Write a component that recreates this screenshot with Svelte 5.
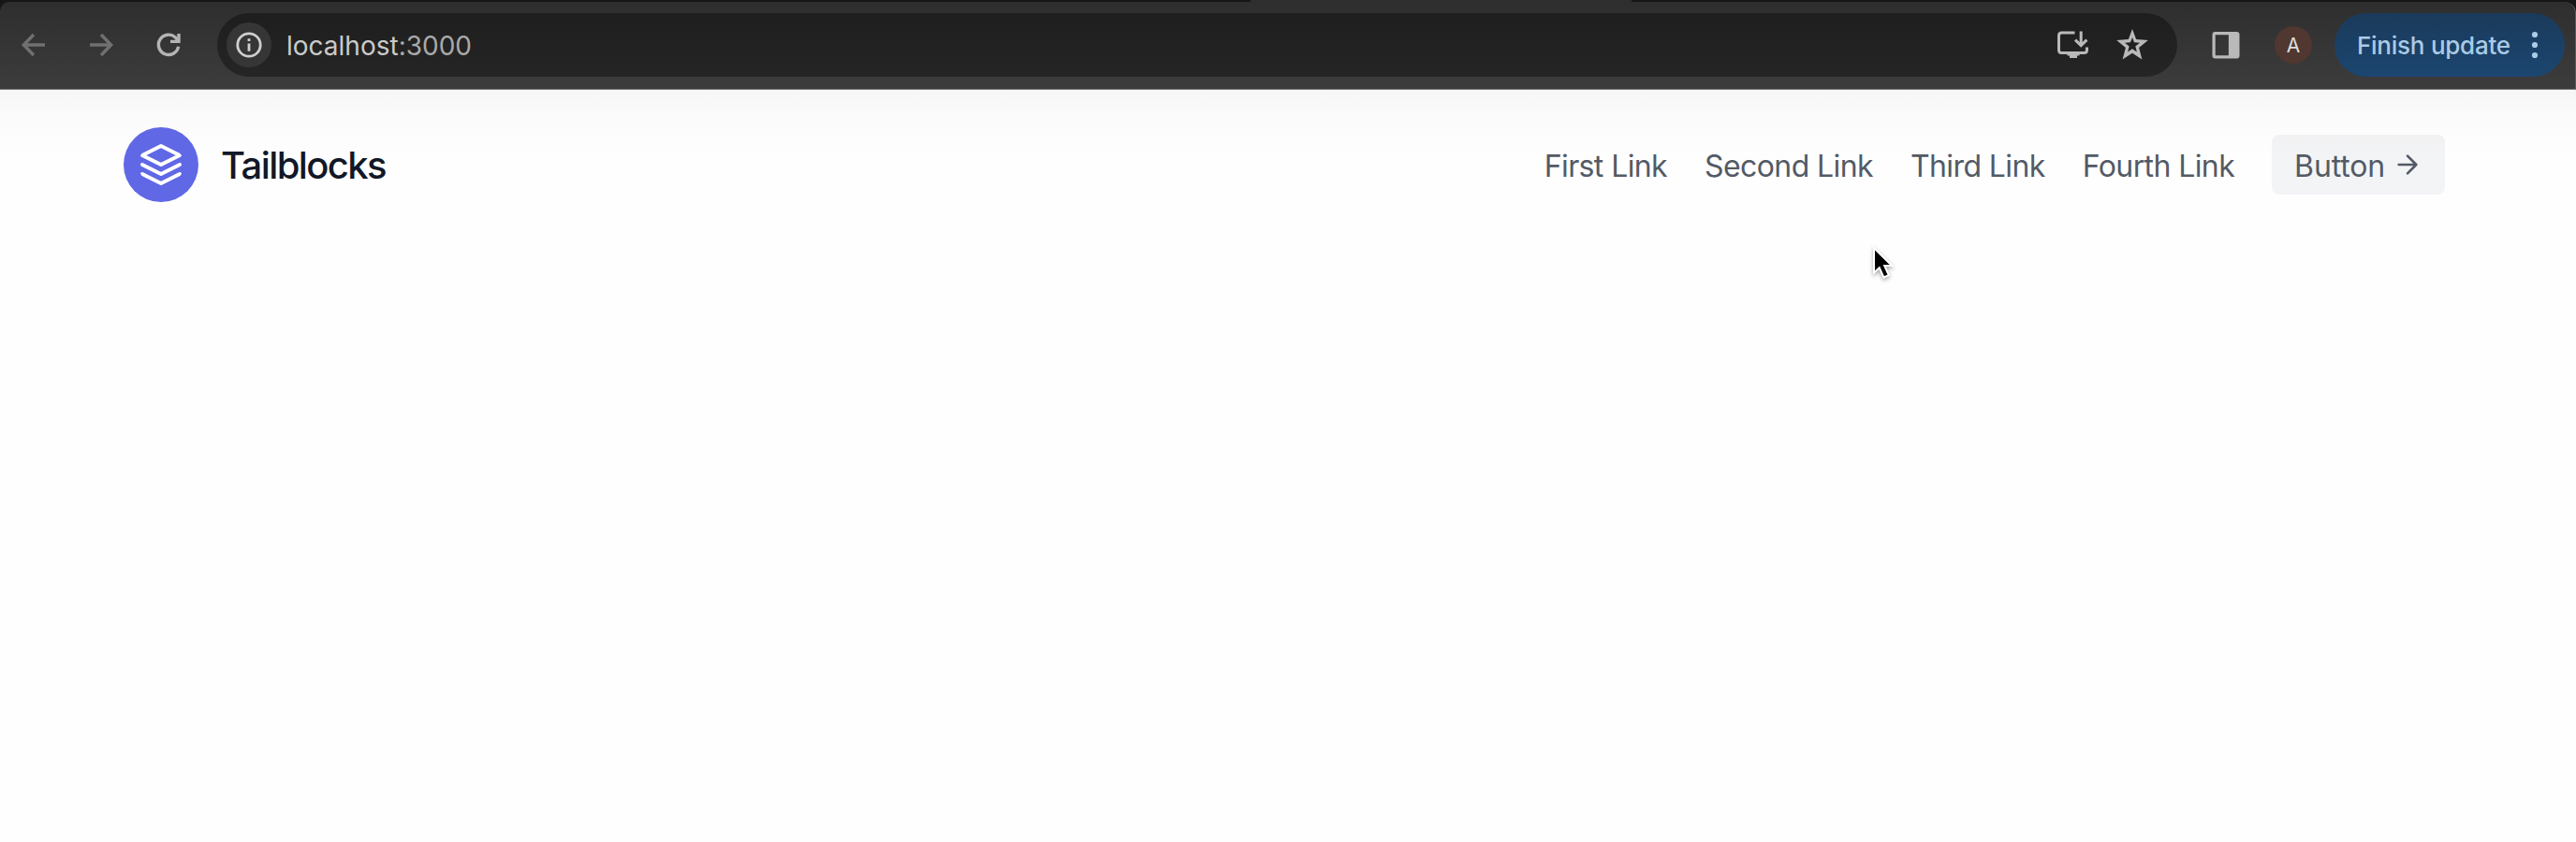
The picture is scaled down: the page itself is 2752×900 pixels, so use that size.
<script lang="ts">
	const links = ['First Link', 'Second Link', 'Third Link', 'Fourth Link'];
	const dots = [37, 48, 59];
</script>

<div class="window">
	<div class="chrome">
		<div class="tab-strip"><span class="active-tab"></span></div>
		<div class="toolbar">
			<div class="controls">
				<svg class="dim" viewBox="0 0 24 24" aria-label="Back">
					<path d="M20 12H5.3M12 4.7 4.9 12l7.1 7.3" />
				</svg>
				<svg class="dim" viewBox="0 0 24 24" aria-label="Forward">
					<path d="M4 12h14.7M12 4.7l7.1 7.3-7.1 7.3" />
				</svg>
				<svg class="reload" viewBox="0 0 36 36" aria-label="Reload">
					<path d="M28.6 19.8A10.7 10.7 0 1 1 25.4 10l3.1 3.8" />
					<path d="M29 6v8.4h-9" />
				</svg>
			</div>

			<div class="omnibox">
				<span class="site-info">
					<svg viewBox="0 0 28 28">
						<circle cx="14" cy="14" r="12.2" />
						<path d="M14 12.5v8.2M14 7.2v2.9" />
					</svg>
				</span>
				<span class="url">localhost<span class="port">:3000</span></span>
				<svg class="install" viewBox="0 0 34 32" aria-label="Install">
					<path d="M19.5 3H5.5Q2.5 3 2.5 6V21.5q0 3 3 3h24q3 0 3-3V18.5" />
					<path d="M26.2 1.5v14.5M20 10.700l6.200 6 6.200-6" />
					<path class="solid" d="M11.5 24h13v3.500h-2.500v2.500h-8v-2.500h-2.500z" />
				</svg>
				<svg class="star" viewBox="0 0 34 34" aria-label="Bookmark">
					<path
						fill-rule="evenodd"
						d="M17 0l4.100 10.900 12.700 1.100-9.700 8 3.300 12.500L17 25.800 6.600 32.500l3.300-12.500-9.700-8 12.700-1.100zM17 9l-2 5.300-6 .4 4.700 3.800-1.600 6L17 21.300l4.900 3.200-1.600-6 4.700-3.800-6-.4z"
					/>
				</svg>
			</div>

			<svg class="panel" viewBox="0 0 30 30" aria-label="Side panel">
				<path
					fill-rule="evenodd"
					d="M3.500 1h23q3 0 3 3v22.500q0 3-3 3h-23q-3 0-3-3V4q0-3 3-3zM3.700 4.200v22.100h14.200V4.200z"
				/>
			</svg>
			<span class="avatar">A</span>
			<div class="update">
				<span>Finish update</span>
				<svg viewBox="0 0 8 96">
					{#each dots as y}
						<circle cx="4" cy={y} r="3.1" />
					{/each}
				</svg>
			</div>
		</div>
	</div>

	<header>
		<a class="brand" href="#top">
			<svg viewBox="0 0 24 24">
				<path d="M12 2L2 7l10 5 10-5-10-5zM2 17l10 5 10-5M2 12l10 5 10-5" />
			</svg>
			<span>Tailblocks</span>
		</a>
		<nav>
			{#each links as link}
				<a href="#top">{link}</a>
			{/each}
		</nav>
		<button>
			<span>Button</span>
			<svg viewBox="0 0 24 24"><path d="M5 12h14M12 5l7 7-7 7" /></svg>
		</button>
	</header>

	<svg class="cursor" viewBox="0 0 28 40">
		<path d="M5 4v26.500l5.800-5.300 4.600 10.300 5.400-2.400-4.600-10.100h8z" />
	</svg>
</div>

<style>
	:global(body) {
		background: #fff;
	}

	.window {
		position: relative;
		height: 900px;
		overflow: hidden;
		font-family: Inter, 'Liberation Sans', sans-serif;
		background: linear-gradient(#f6f6f6 96px, #fafafa 122px, #fdfdfd 148px, #fefefe 170px, #fefefe);
	}

	svg {
		flex-shrink: 0;
		fill: none;
	}

	.chrome {
		background: #161616;
	}

	.tab-strip {
		height: 2px;
	}

	.active-tab {
		display: block;
		width: 407px;
		height: 2px;
		margin-left: 1336px;
		background: #2e2e2e;
	}

	.toolbar {
		display: flex;
		align-items: center;
		box-sizing: border-box;
		height: 94px;
		padding: 0 11px 1px 18px;
		border-right: 1px solid #5a5a5a;
		border-bottom: 1px solid #777;
		border-radius: 10px 12px 0 0;
		background: linear-gradient(#2e2e2e, #3c3c3c);
	}

	.controls {
		display: flex;
		gap: 36px;
		width: 214px;
	}

	.controls svg {
		width: 36px;
		height: 36px;
		stroke: #707070;
		stroke-width: 2.3;
	}

	.controls .reload {
		stroke: #b4b4b4;
		stroke-width: 3.4;
	}

	.omnibox {
		display: flex;
		align-items: center;
		box-sizing: border-box;
		width: 2094px;
		height: 68px;
		padding: 0 31px 0 10px;
		border-radius: 34px;
		background: linear-gradient(#1e1e1e, #252525);
	}

	.site-info {
		display: flex;
		align-items: center;
		justify-content: center;
		width: 48px;
		height: 48px;
		border-radius: 50%;
		background: #363636;
	}

	.site-info svg {
		width: 28px;
		height: 28px;
		stroke: #cfcfcf;
		stroke-width: 2.8;
	}

	.url {
		flex: 1;
		margin-left: 16px;
		padding-top: 1px;
		font-size: 28px;
		color: #cacaca;
	}

	.port {
		color: #a9a9a9;
	}

	.install {
		width: 34px;
		height: 32px;
		margin-right: 30px;
		stroke: #b9b9b9;
		stroke-width: 3;
	}

	.install .solid {
		fill: #b9b9b9;
		stroke: none;
	}

	.star {
		width: 34px;
		height: 34px;
		fill: #b9b9b9;
	}

	.panel {
		width: 30px;
		height: 30px;
		margin-left: 37px;
		fill: #b9b9b9;
	}

	.avatar {
		width: 40px;
		height: 40px;
		margin: 0 24px 0 37px;
		border-radius: 50%;
		background: #50372f;
		color: #ddd;
		font-size: 21px;
		line-height: 41px;
		text-align: center;
	}

	.update {
		display: flex;
		align-items: center;
		justify-content: space-between;
		box-sizing: border-box;
		width: 246px;
		height: 68px;
		padding: 0 28px 0 24px;
		border-radius: 34px;
		background: linear-gradient(#1b3a5b, #1b4670);
		color: #a9cbe6;
		font-size: 26px;
		font-weight: 500;
		letter-spacing: -0.25px;
		white-space: nowrap;
	}

	.update span {
		padding-top: 1px;
	}

	.update svg {
		width: 8px;
		height: 96px;
		fill: #a9cbe6;
	}

	header {
		display: flex;
		align-items: center;
		height: 160px;
		padding: 0 140px 0 132px;
		color: #535a66;
	}

	a {
		color: inherit;
		text-decoration: none;
	}

	.brand {
		display: flex;
		align-items: center;
		color: #111827;
		font-size: 40px;
		font-weight: 500;
		letter-spacing: -1.6px;
	}

	.brand span {
		padding-top: 1px;
	}

	.brand svg {
		width: 48px;
		height: 48px;
		margin-right: 24px;
		padding: 16px;
		border-radius: 50%;
		background: #6068e6;
		stroke: #fff;
		stroke-width: 2;
		stroke-linecap: round;
		stroke-linejoin: round;
	}

	nav {
		display: flex;
		gap: 40px;
		margin: 0 40px 0 auto;
		padding-top: 2px;
		font-size: 32px;
		letter-spacing: -0.6px;
	}

	button {
		display: flex;
		align-items: center;
		height: 64px;
		padding: 0 24px;
		border: 0;
		border-radius: 8px;
		background: linear-gradient(#f1f1f2, #f3f4f6 40%);
		color: inherit;
		font: 32px Inter, sans-serif;
		letter-spacing: -0.15px;
	}

	button span {
		padding-top: 2px;
	}

	button svg {
		width: 32px;
		height: 32px;
		margin-left: 8px;
		stroke: currentColor;
		stroke-width: 2;
		stroke-linecap: round;
		stroke-linejoin: round;
	}

	.cursor {
		position: absolute;
		top: 261px;
		left: 1997px;
		width: 28px;
		height: 40px;
		fill: #000;
		stroke: #fff;
		stroke-width: 2;
		filter: drop-shadow(0 2px 2px rgb(0 0 0 / 0.35));
	}
</style>
